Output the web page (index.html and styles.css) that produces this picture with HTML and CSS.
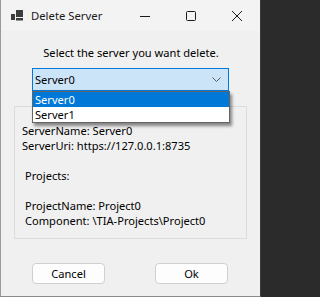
FILE: index.html
```html
<!DOCTYPE html>
<html>
<head>
<meta charset="utf-8">
<link rel="stylesheet" href="styles.css">
</head>
<body>
<div class="window">
  <div class="titlebar">
    <svg class="appicon" width="12" height="11" viewBox="0 0 12 11">
      <rect x="0" y="4" width="4" height="6" fill="#3c3c3c"/>
      <rect x="5" y="0" width="7" height="7" fill="#3c3c3c"/>
      <rect x="5" y="8" width="7" height="2.5" fill="#3c3c3c"/>
    </svg>
    <span class="title">Delete Server</span>
    <div class="caption">
      <div class="cbtn"><svg width="12" height="12" viewBox="0 0 12 12"><line x1="1" y1="6.5" x2="11" y2="6.5" stroke="#1a1a1a" stroke-width="1"/></svg></div>
      <div class="cbtn"><svg width="12" height="12" viewBox="0 0 12 12"><rect x="1.5" y="1.5" width="9" height="9" rx="1" fill="none" stroke="#1a1a1a" stroke-width="1"/></svg></div>
      <div class="cbtn"><svg width="12" height="12" viewBox="0 0 12 12"><path d="M1 1 L11 11 M11 1 L1 11" stroke="#1a1a1a" stroke-width="1"/></svg></div>
    </div>
  </div>
  <div class="content">
    <div class="prompt">Select the server you want delete.</div>
    <div class="combo-wrap">
      <div class="combo">
        <span>Server0</span>
        <svg class="chev" width="9" height="5" viewBox="0 0 9 5"><path d="M0.5 0.5 L4.5 4.5 L8.5 0.5" fill="none" stroke="#5a5a5a" stroke-width="1"/></svg>
      </div>
      <div class="droplist">
        <div class="item sel">Server0</div>
        <div class="item">Server1</div>
      </div>
    </div>
    <div class="group">
      <div class="line">ServerName: Server0</div>
      <div class="line">ServerUri: https://127.0.0.1:8735</div>
      <div class="line blank"></div>
      <div class="line ind">Projects:</div>
      <div class="line blank"></div>
      <div class="line ind">ProjectName: Project0</div>
      <div class="line ind">Component: \TIA-Projects\Project0</div>
    </div>
    <div class="buttons">
      <div class="btn">Cancel</div>
      <div class="btn">Ok</div>
    </div>
  </div>
</div>
</body>
</html>
```
FILE: styles.css
```css
html, body {
  margin: 0;
  padding: 0;
  background: #2b2b2b;
}
body {
  width: 261px;
  height: 297px;
  font-family: "Noto Sans", "Open Sans", sans-serif;
  font-size: 11.1px;
  color: #000;
}
.window {
  box-sizing: border-box;
  width: 261px;
  height: 297px;
  background: #f0f0f0;
  border-left: 1px solid #9a9a9a;
  border-right: 1px solid #3a3a3a;
  border-bottom: 1px solid #8a8a8a;
  display: flex;
  flex-direction: column;
}
.titlebar {
  height: 31px;
  background: #f3f3f3;
  display: flex;
  align-items: center;
  flex-shrink: 0;
}
.appicon {
  margin-left: 10px;
  margin-top: -1px;
}
.title {
  margin-left: 8px;
  font-size: 11.3px;
  color: #1a1a1a;
  margin-top: -1px;
}
.caption {
  margin-left: auto;
  display: flex;
  height: 100%;
}
.cbtn {
  width: 46px;
  height: 100%;
  display: flex;
  align-items: center;
  justify-content: center;
}
.content {
  display: flex;
  flex-direction: column;
  flex: 1;
}
.prompt {
  text-align: center;
  line-height: 15px;
  margin-top: 14px;
  padding-left: 1px;
}
.combo-wrap {
  position: relative;
  margin: 8px 0 0 31px;
  width: 197px;
}
.combo {
  box-sizing: border-box;
  height: 23px;
  background: #cce4f7;
  border: 1px solid #0078d7;
  display: flex;
  align-items: center;
  padding-left: 2px;
}
.combo span {
  line-height: 15px;
}
.chev {
  margin-left: auto;
  margin-right: 7px;
}
.droplist {
  position: absolute;
  left: 0;
  top: 23px;
  width: 198px;
  box-sizing: border-box;
  background: #fff;
  border: 1px solid #646464;
  box-shadow: 2px 3px 3px rgba(0, 0, 0, 0.45);
  z-index: 2;
}
.item {
  height: 15px;
  line-height: 15px;
  padding-left: 2px;
}
.item.sel {
  background: #0078d7;
  color: #fff;
}
.group {
  margin: 15px 0 0 13px;
  width: 233px;
  box-sizing: border-box;
  border: 1px solid #dcdcdc;
  padding: 16px 0 10px 7px;
}
.line {
  height: 15px;
  line-height: 15px;
  white-space: nowrap;
}
.line.ind {
  padding-left: 3px;
}
.buttons {
  display: flex;
  margin: 24px 0 0 31px;
  gap: 50px;
}
.btn {
  box-sizing: border-box;
  width: 73px;
  height: 21px;
  background: #fdfdfd;
  border: 1px solid #d0d0d0;
  border-radius: 4px;
  display: flex;
  align-items: center;
  justify-content: center;
}
```
